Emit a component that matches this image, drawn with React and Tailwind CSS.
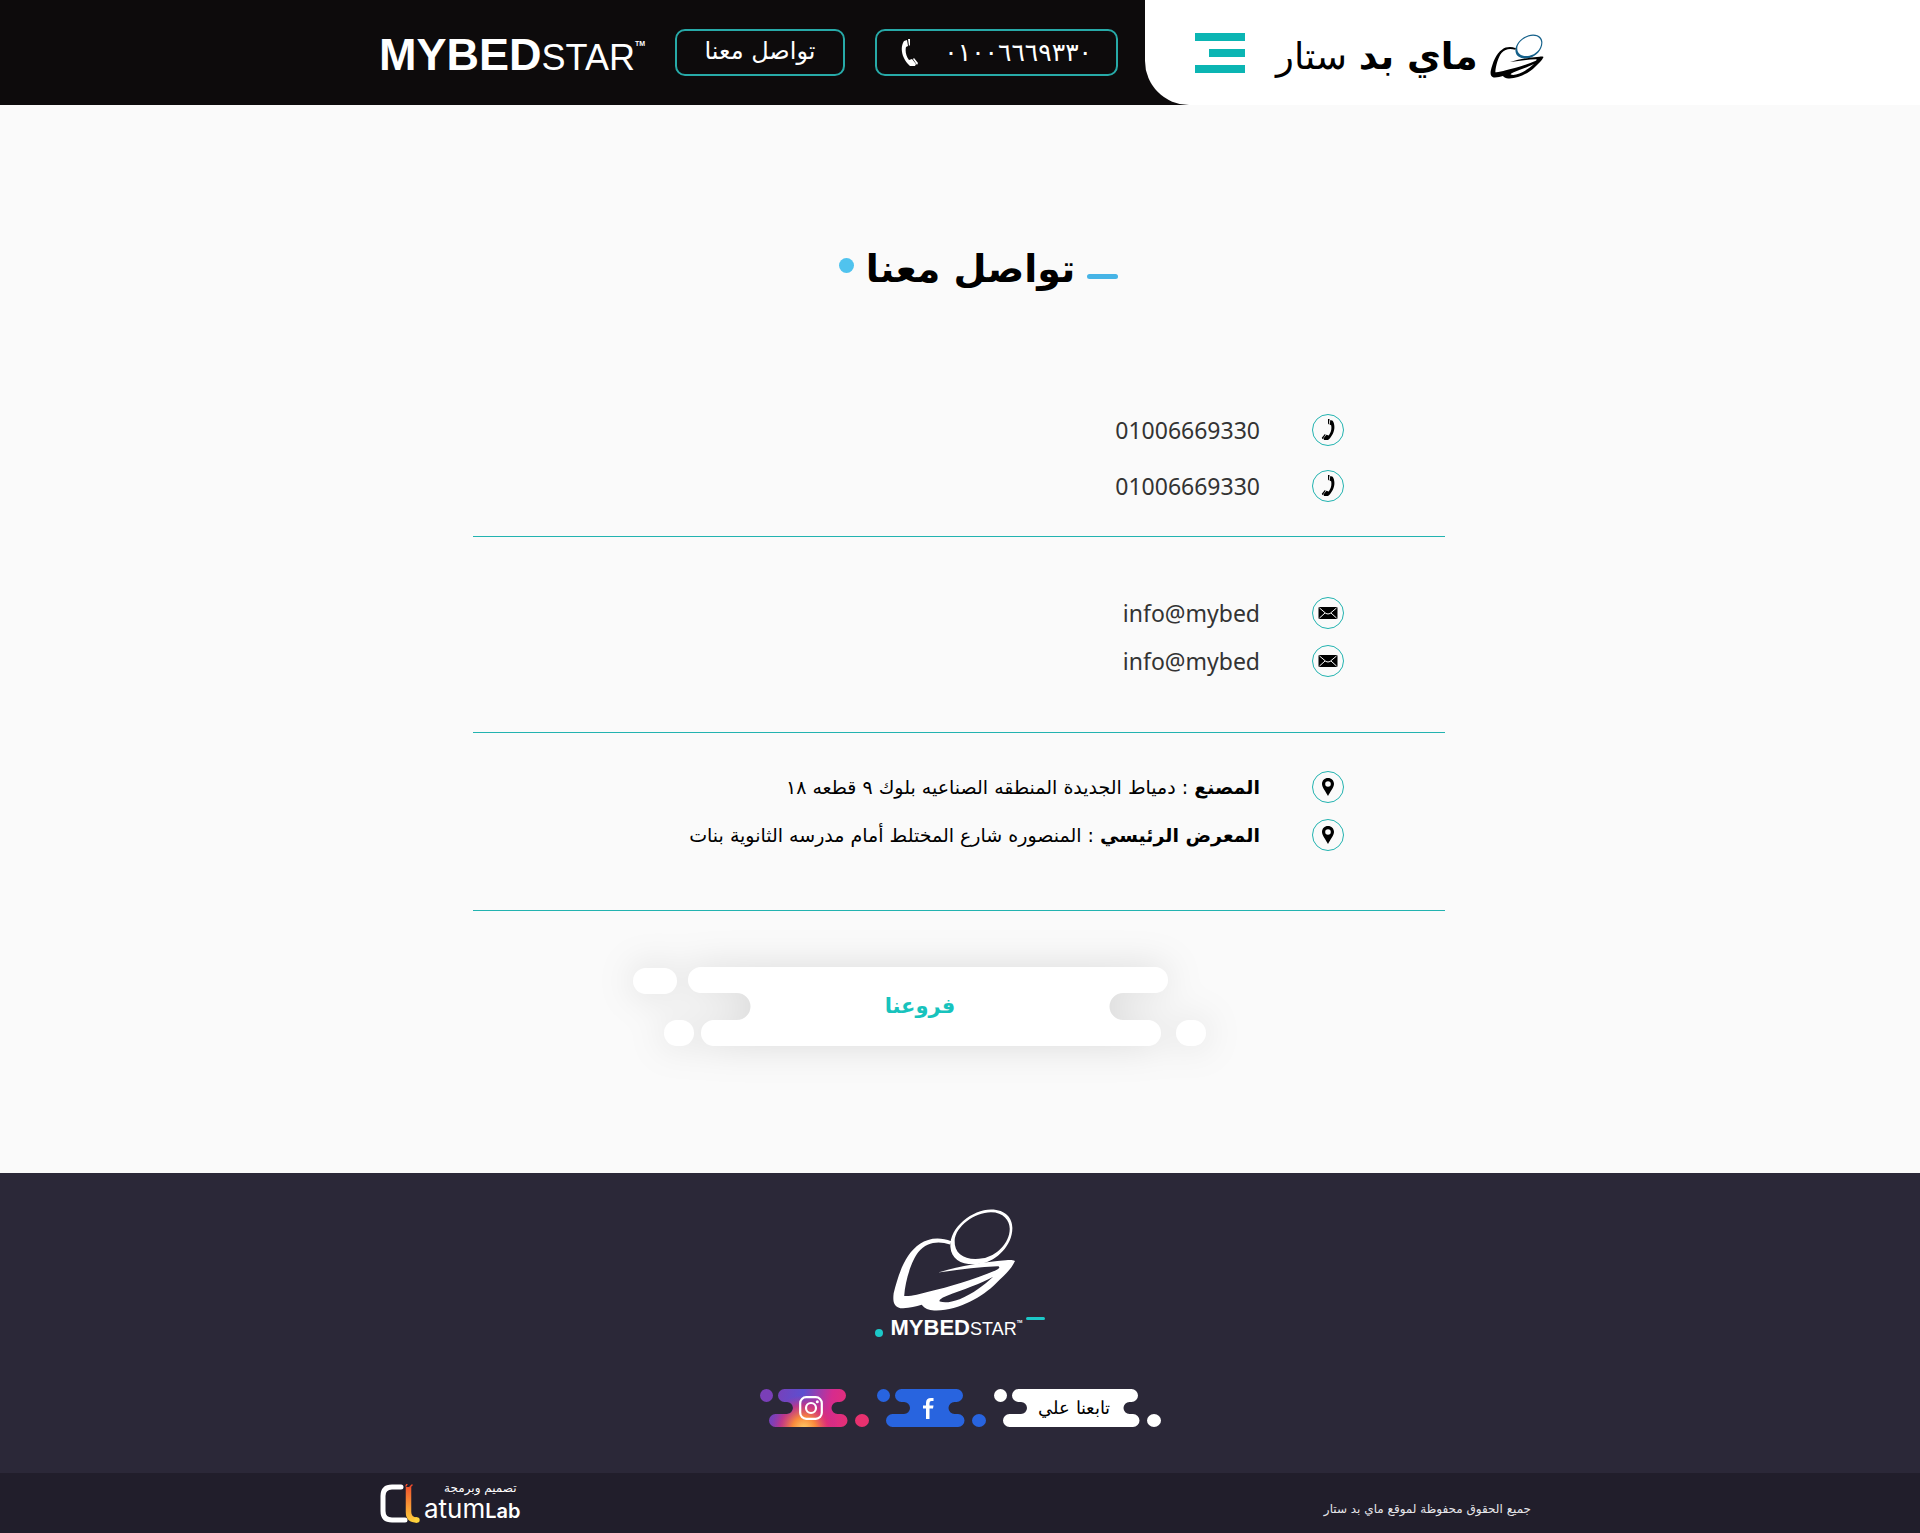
const ARABIC = "font-['DejaVu_Sans',sans-serif]";

function SleeperMark({ className, headClass }) {
  return (
    <svg viewBox="125 52 376 314" className={className} fill="currentColor" fillRule="evenodd" aria-hidden="true">
      <path
        className={headClass}
        d="M302 169C299 109 370 56 425 56C471 56 490 84 490 112C490 166 441 211 400 219C349 229 305 215 302 169ZM315 150C317 108 375 64 425 64C463 64 482 89 482 114C482 159 440 197 400 204C350 212 313 194 315 150Z"
      />
      <path d="M305 152C270 138 235 142 210 160C165 190 145 250 130 310C127 335 130 350 150 355C175 357 195 350 215 345C225 358 240 364 260 362C330 360 400 320 440 280C465 255 485 240 498 212C490 208 480 209 470 210C400 215 330 228 265 247C330 238 390 230 445 228C455 229 450 235 440 240C370 270 300 290 235 305C210 312 180 320 162 318C165 270 185 210 205 185C230 155 265 150 301 162ZM432 260C405 285 370 312 330 328C305 337 285 340 270 335C265 330 280 322 290 318C340 300 395 280 432 260Z" />
    </svg>
  );
}

function Handset({ className }) {
  return (
    <svg viewBox="0 0 18 28" className={className} fill="currentColor" aria-hidden="true">
      <path d="M6 1L3 2C-1 8 0 19 9 27L14 27L15 25L11 20L8 21C5 17 4 12 5 8L7 7Z" />
      <path d="M7 0L9 0L9 6L8 7ZM12 20L13 19L17 24L16 26Z" />
    </svg>
  );
}

function Envelope() {
  return (
    <svg viewBox="0 0 19 12" className="h-3 w-5" aria-hidden="true">
      <rect width="19" height="12" rx="1" fill="#000" />
      <path d="M1 1L7.500 6.500Q9.500 7.500 11.500 6.500L18 1M1 11L6.500 6M18 11L12.500 6" fill="none" stroke="#fafafa" strokeWidth="1" />
    </svg>
  );
}

function Pin() {
  return (
    <svg viewBox="0 0 12 18" className="h-[18px] w-3" fillRule="evenodd" aria-hidden="true">
      <path d="M6 0C2.500 0 0 2.600 0 6C0 9.500 4 14 6 18C8 14 12 9.500 12 6C12 2.600 9.500 0 6 0ZM6 3.200A2.800 2.800 0 1 1 6 8.800A2.800 2.800 0 1 1 6 3.200Z" />
    </svg>
  );
}

function ContactRow({ icon, children }) {
  return (
    <li className="flex flex-row-reverse items-center gap-[52px] leading-8">
      <span className="flex size-8 shrink-0 items-center justify-center rounded-full border border-[#22b3b0]">{icon}</span>
      {children}
    </li>
  );
}

function SocialBlob({ label, fill, extra, children, wide }) {
  const w = extra;
  return (
    <a href="#" aria-label={label} className={`relative flex h-[38px] items-center justify-center ${wide ? "w-[167px]" : "w-[109px]"}`}>
      <svg viewBox={`0 0 ${109 + w} 38`} className="absolute inset-0 size-full" fill={fill} aria-hidden="true">
        <defs>
          <linearGradient id="insta" gradientUnits="userSpaceOnUse" x1="15" y1="0" x2="95" y2="16">
            <stop offset="0" stopColor="#7a3fb8" />
            <stop offset="0.35" stopColor="#5c4fd0" />
            <stop offset="0.7" stopColor="#d62b8e" />
            <stop offset="1" stopColor="#e8316f" />
          </linearGradient>
          <radialGradient id="instaGlow" gradientUnits="userSpaceOnUse" cx="44" cy="40" r="34">
            <stop offset="0" stopColor="#ffd06a" />
            <stop offset="0.35" stopColor="#f98a3c" />
            <stop offset="0.7" stopColor="#e2306f" stopOpacity="0.7" />
            <stop offset="1" stopColor="#c02a90" stopOpacity="0" />
          </radialGradient>
        </defs>
        <circle cx="6.500" cy="6.500" r="6.500" />
        <ellipse cx={102 + w} cy="31.500" rx="7" ry="6.500" />
        <path d={`M24.500 0H${79.5 + w}a6.500 6.500 0 0 1 0 13H${77.5 + w}a6 6 0 0 0 0 12H${81 + w}a6.500 6.500 0 0 1 0 13H15.500a6.500 6.500 0 0 1 0-13H27a6 6 0 0 0 0-12H24.500a6.500 6.500 0 0 1 0-13Z`} />
        {fill === "url(#insta)" && (
          <path fill="url(#instaGlow)" d="M24.500 0H79.500a6.500 6.500 0 0 1 0 13H77.500a6 6 0 0 0 0 12H81a6.500 6.500 0 0 1 0 13H15.500a6.500 6.500 0 0 1 0-13H27a6 6 0 0 0 0-12H24.500a6.500 6.500 0 0 1 0-13Z" />
        )}
      </svg>
      <span className="relative mr-1.5 flex">{children}</span>
    </a>
  );
}

export default function App() {
  return (
    <div className={`min-h-screen bg-[#fafafa] whitespace-nowrap text-black ${ARABIC}`}>
      <header className="flex h-[105px] bg-white">
        <div className="flex flex-1 items-center justify-end gap-[30px] bg-[#0d0b0c] pr-[27px]">
          <a href="#" className="mt-1 flex items-baseline font-['Liberation_Sans',sans-serif] text-white" aria-label="MYBEDSTAR">
            <span className="text-[45px] leading-none font-bold">MYBED</span>
            <span className="text-4xl leading-none font-light">STAR</span>
            <span className="self-start pt-2 text-[7px] leading-none font-bold">TM</span>
          </a>
          <a href="#" dir="rtl" className="flex h-[47px] w-[170px] items-center justify-center rounded-[10px] border-2 border-[#27aaa8] pb-1 text-2xl text-white">
            تواصل معنا
          </a>
          <a href="tel:01006669330" className="flex h-[47px] w-[243px] items-center justify-between rounded-[10px] border-2 border-[#27aaa8] px-6 text-white">
            <Handset className="h-7 w-[18px]" />
            <span className="text-[25px] leading-none">٠١٠٠٦٦٦٩٣٣٠</span>
          </a>
        </div>
        <div className="w-[calc(50%-185px)] bg-[#0d0b0c]">
          <div className="flex h-full items-center gap-[31px] rounded-bl-[44px] bg-white pl-[50px]">
            <button type="button" aria-label="القائمة" className="flex w-[50px] flex-col items-end gap-2">
              <span className="h-2 w-full bg-[#0bb5b3]" />
              <span className="h-2 w-9 bg-[#0bb5b3]" />
              <span className="h-2 w-full bg-[#0bb5b3]" />
            </button>
            <a href="#" dir="rtl" className="flex items-center gap-3 pt-2">
              <SleeperMark className="h-[47px] w-[54px]" headClass="text-[#14608a]" />
              <span className="text-[37px] leading-none">
                <b>ماي بد</b> <span className="font-extralight">ستار</span>
              </span>
            </a>
          </div>
        </div>
      </header>

      <main className="flex flex-col items-center pt-[136px] pb-[127px]">
        <h1 dir="rtl" className="ml-[37px] flex h-14 items-center gap-3 text-[38px] leading-none font-bold">
          <span className="mt-3.5 h-[5px] w-[31px] rounded-full bg-[#46b4e6]" />
          تواصل معنا
          <span className="mb-2 size-[15px] rounded-full bg-[#50c3ee]" />
        </h1>

        <div className="mr-0.5 w-full max-w-[972px]">
          <ul className="flex flex-col gap-6 border-b border-[#22b3b0] pt-[117px] pr-[101px] pb-[34px] font-['Noto_Sans',sans-serif] text-[23px] text-[#333]">
            <ContactRow icon={<Handset className="h-[22px] w-[14px] -scale-x-100 text-black" />}>
              <a href="tel:01006669330">01006669330</a>
            </ContactRow>
            <ContactRow icon={<Handset className="h-[22px] w-[14px] -scale-x-100 text-black" />}>
              <a href="tel:01006669330">01006669330</a>
            </ContactRow>
          </ul>
          <ul className="flex flex-col gap-4 border-b border-[#22b3b0] pt-[60px] pr-[101px] pb-[55px] font-['Noto_Sans',sans-serif] text-[23px] text-[#333]">
            <ContactRow icon={<Envelope />}>
              <a href="mailto:info@mybed">info@mybed</a>
            </ContactRow>
            <ContactRow icon={<Envelope />}>
              <a href="mailto:info@mybed">info@mybed</a>
            </ContactRow>
          </ul>
          <ul className="flex flex-col gap-4 border-b border-[#22b3b0] pt-[38px] pr-[101px] pb-[59px] text-[19px]">
            <ContactRow icon={<Pin />}>
              <p dir="rtl">
                <b>المصنع</b> : دمياط الجديدة المنطقه الصناعيه بلوك ٩ قطعه ١٨
              </p>
            </ContactRow>
            <ContactRow icon={<Pin />}>
              <p dir="rtl">
                <b>المعرض الرئيسي</b> : المنصوره شارع المختلط أمام مدرسه الثانوية بنات
              </p>
            </ContactRow>
          </ul>
        </div>

        <button type="button" className="relative mt-14 mr-20 flex h-[79px] w-[574px] items-center justify-center">
          <svg viewBox="0 0 574 79" className="absolute inset-0 size-full overflow-visible drop-shadow-[0_0_18px_rgba(0,0,0,0.13)]" fill="#fff" aria-hidden="true">
            <rect x="0" y="1" width="44" height="26" rx="13" />
            <rect x="31" y="53" width="30" height="26" rx="13" />
            <rect x="543" y="53" width="30" height="26" rx="13" />
            <path d="M68 0H522a13 13 0 0 1 0 26H490a13.500 13.500 0 0 0 0 27H515a13 13 0 0 1 0 26H81a13 13 0 0 1 0-26H104a13.500 13.500 0 0 0 0-27H68a13 13 0 0 1 0-26Z" />
          </svg>
          <span dir="rtl" className="relative text-[21px] leading-none font-bold text-[#17c3bd]">فروعنا</span>
        </button>
      </main>

      <footer className="text-white">
        <div className="flex h-[300px] flex-col items-center bg-[#2b2838] pt-[35px]">
          <SleeperMark className="mr-3 h-[104px] w-[124px]" />
          <div className="mt-0.5 flex items-center gap-1">
            <span className="mt-2 mr-1 size-2 rounded-full bg-[#1cc8c8]" />
            <span className="flex items-baseline font-['Liberation_Sans',sans-serif]">
              <span className="text-[22px] leading-7 font-bold">MYBED</span>
              <span className="text-lg leading-7 font-light">STAR</span>
              <span className="self-start pt-1.5 text-[4px] leading-none font-bold">TM</span>
            </span>
            <span className="mb-5 h-[3px] w-[19px] rounded-full bg-[#1cc8c8]" />
          </div>
          <div className="mt-[46px] flex gap-2">
            <SocialBlob label="Instagram" fill="url(#insta)" extra={0}>
              <svg viewBox="0 0 24 24" className="size-6" fill="none" stroke="#fff" strokeWidth="2.2" aria-hidden="true">
                <rect x="1.200" y="1.200" width="21.600" height="21.600" rx="6" />
                <circle cx="12" cy="12" r="5" />
                <circle cx="18.300" cy="5.700" r="1.500" fill="#fff" stroke="none" />
              </svg>
            </SocialBlob>
            <SocialBlob label="Facebook" fill="#2864df" extra={0}>
              <svg viewBox="0 0 11 21" className="h-[21px] w-[11px]" fill="#fff" aria-hidden="true">
                <path d="M3 21V10.500H0V7.500H3V5Q3 0 8 0H10.500V3H8.500Q6.500 3 6.500 5V7.500H10.500L10 10.500H6.500V21Z" />
              </svg>
            </SocialBlob>
            <SocialBlob label="تابعنا علي" fill="#fff" extra={58} wide>
              <span dir="rtl" className="text-lg leading-none font-extralight text-black">تابعنا علي</span>
            </SocialBlob>
          </div>
        </div>
        <div className="h-[60px] bg-[#211e2b]">
          <div className="mx-auto flex h-full max-w-[1160px] items-center justify-between pr-[9px]">
            <a href="#" className="flex items-center gap-1">
              <svg viewBox="0 0 40 39" className="h-[39px] w-10" fill="none" strokeLinecap="round" aria-hidden="true">
                <defs>
                  <linearGradient id="flame" gradientUnits="userSpaceOnUse" x1="0" y1="0" x2="0" y2="39">
                    <stop offset="0" stopColor="#ef4b2c" />
                    <stop offset="1" stopColor="#ffd33c" />
                  </linearGradient>
                </defs>
                <path d="M21 3H12Q3 3 3 12V27Q3 36 12 36H25" stroke="#fff" strokeWidth="5" />
                <path d="M28.500 3V28Q28.500 36 37 36" stroke="url(#flame)" strokeWidth="5.500" strokeLinecap="butt" />
                <path d="M26 2L27 0M30 3L32 1" stroke="#ef4b2c" strokeWidth="1.500" />
                <circle cx="37" cy="36" r="2.700" fill="#ffd33c" />
              </svg>
              <span className="flex flex-col items-end">
                <span dir="rtl" className="mr-1 text-xs leading-[14px]">تصميم وبرمجة</span>
                <span className="flex items-baseline font-['Inter',sans-serif] leading-7">
                  <span className="text-[26px]">atum</span>
                  <span className="text-xl font-semibold">Lab</span>
                </span>
              </span>
            </a>
            <p dir="rtl" className="pt-3 text-xs leading-none text-[#e6e6ea]">جميع الحقوق محفوظة لموقع ماي بد ستار</p>
          </div>
        </div>
      </footer>
    </div>
  );
}
